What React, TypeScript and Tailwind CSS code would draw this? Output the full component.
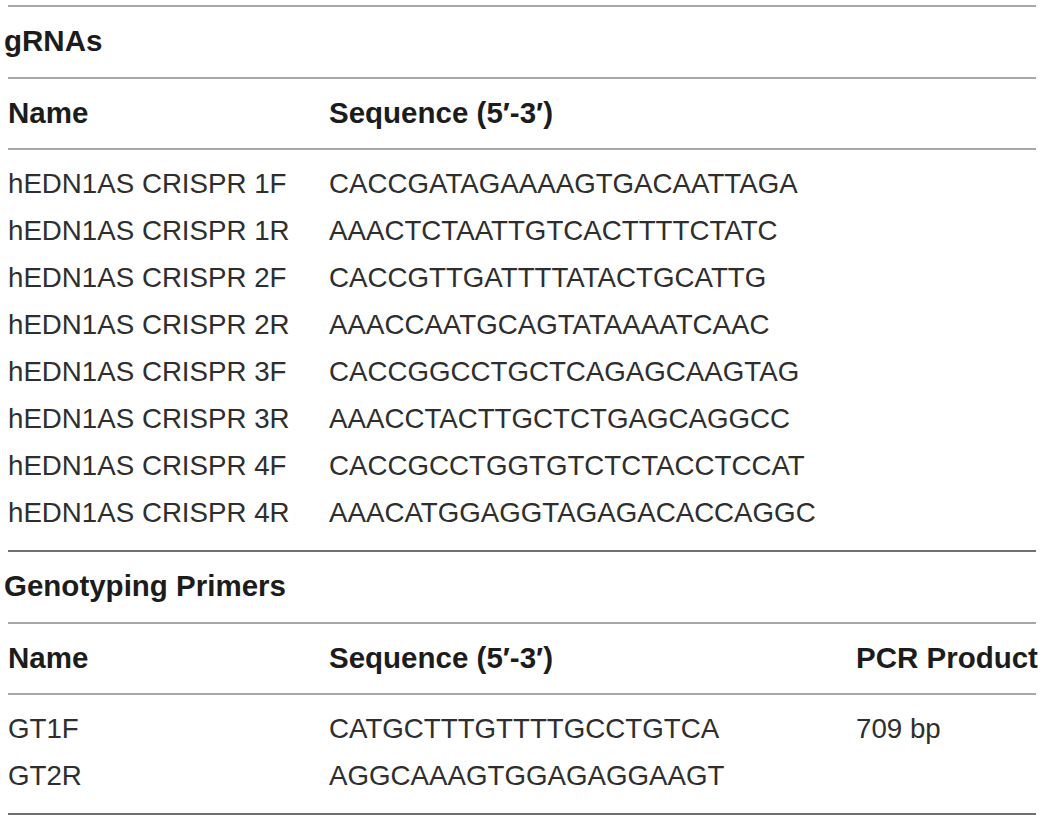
const grnas = [
  ['hEDN1AS CRISPR 1F', 'CACCGATAGAAAAGTGACAATTAGA'],
  ['hEDN1AS CRISPR 1R', 'AAACTCTAATTGTCACTTTTCTATC'],
  ['hEDN1AS CRISPR 2F', 'CACCGTTGATTTTATACTGCATTG'],
  ['hEDN1AS CRISPR 2R', 'AAACCAATGCAGTATAAAATCAAC'],
  ['hEDN1AS CRISPR 3F', 'CACCGGCCTGCTCAGAGCAAGTAG'],
  ['hEDN1AS CRISPR 3R', 'AAACCTACTTGCTCTGAGCAGGCC'],
  ['hEDN1AS CRISPR 4F', 'CACCGCCTGGTGTCTCTACCTCCAT'],
  ['hEDN1AS CRISPR 4R', 'AAACATGGAGGTAGAGACACCAGGC'],
]

const primers = [
  ['GT1F', 'CATGCTTTGTTTTGCCTGTCA', '709 bp'],
  ['GT2R', 'AGGCAAAGTGGAGAGGAAGT', ''],
]

function Rule({ dark }: { dark?: boolean }) {
  return (
    <div
      className={`ml-[8px] mr-[6px] h-[2px] ${dark ? 'bg-[#707070]' : 'bg-[#a8a8a8]'}`}
    />
  )
}

function Row({ cells }: { cells: string[] }) {
  return (
    <div className="grid h-[47px] grid-cols-[321px_527px_1fr] items-center pl-[8px] text-[27.7px] text-[#2e2e2e]">
      {cells.map((c, i) => (
        <div key={i} className="whitespace-nowrap">
          {c}
        </div>
      ))}
    </div>
  )
}

function Header({ cols }: { cols: string[] }) {
  return (
    <div className="grid h-[69px] grid-cols-[321px_527px_1fr] items-center pl-[8px] text-[29.5px] font-bold text-[#1c1c1c]">
      {cols.map((c) => (
        <div key={c} className="whitespace-nowrap">
          {c}
        </div>
      ))}
    </div>
  )
}

function SectionTitle({ title }: { title: string }) {
  return (
    <div className="flex h-[70px] items-center pb-[2px] pl-[4px] text-[29.5px] font-bold text-[#1c1c1c]">
      {title}
    </div>
  )
}

export default function App() {
  return (
    <div
      className="h-[817px] w-[1042px] bg-white pt-[5px]"
      style={{ fontFamily: '"Liberation Sans", Arial, sans-serif' }}
    >
      <Rule />
      <SectionTitle title="gRNAs" />
      <Rule />
      <Header cols={['Name', 'Sequence (5′-3′)']} />
      <Rule />
      <div className="pb-[14px] pt-[10px]">
        {grnas.map((r) => (
          <Row key={r[0]} cells={r} />
        ))}
      </div>
      <Rule dark />
      <SectionTitle title="Genotyping Primers" />
      <Rule />
      <Header cols={['Name', 'Sequence (5′-3′)', 'PCR Product']} />
      <Rule />
      <div className="pb-[14px] pt-[10px]">
        {primers.map((r) => (
          <Row key={r[0]} cells={r} />
        ))}
      </div>
      <Rule dark />
    </div>
  )
}
